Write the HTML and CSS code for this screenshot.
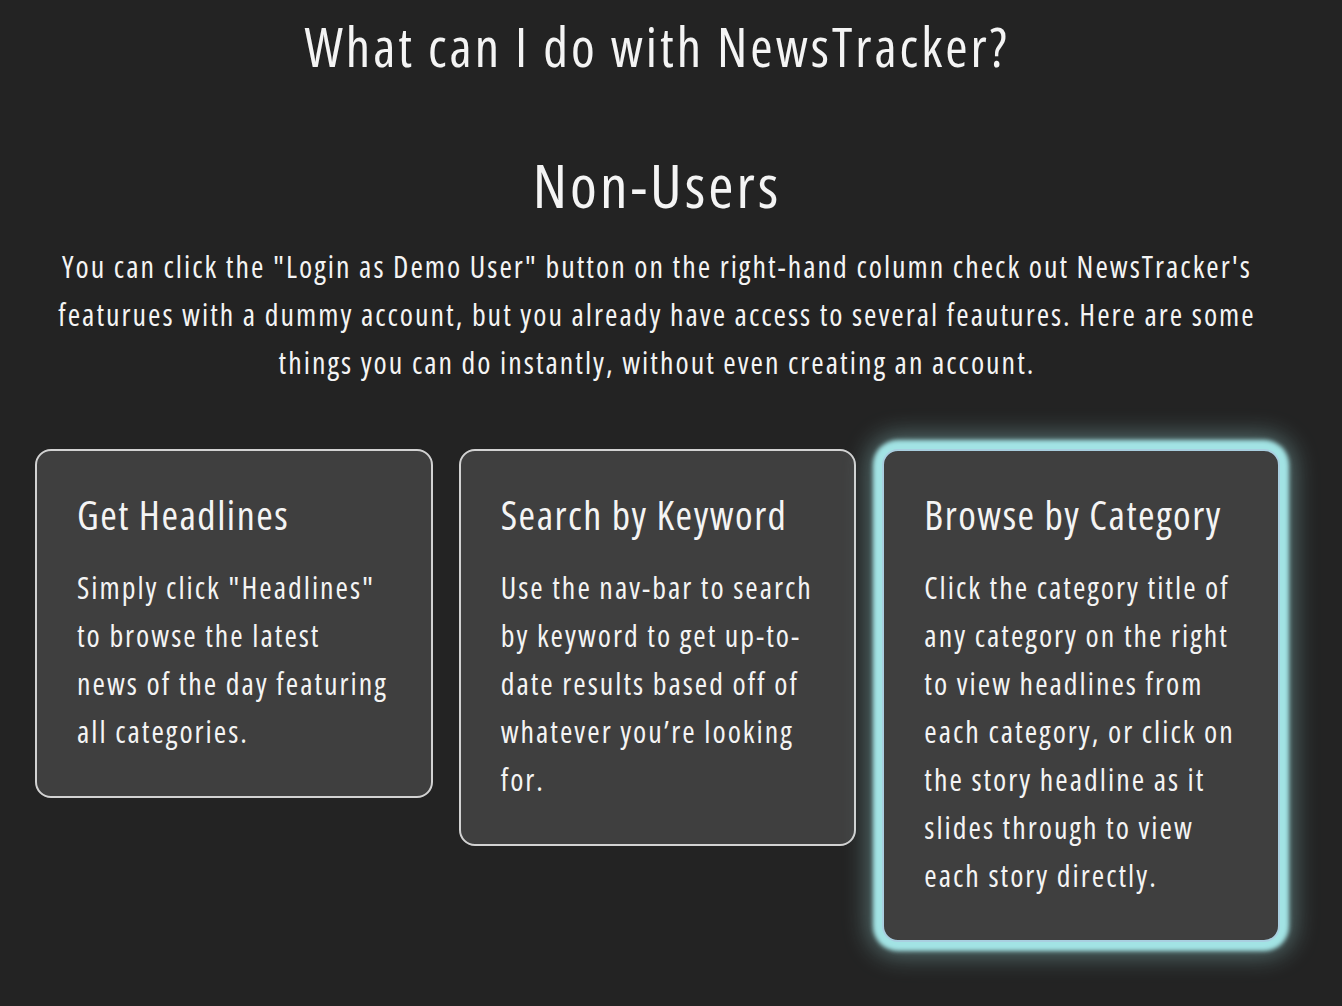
FILE: index.html
```html
<!DOCTYPE html>
<html lang="en">
<head>
<meta charset="utf-8">
<title>NewsTracker</title>
<link rel="stylesheet" href="styles.css">
</head>
<body>
<main class="about">
  <h1 class="about-title">What can I do with NewsTracker?</h1>
  <h2 class="section-title">Non-Users</h2>
  <p class="section-intro">You can click the "Login as Demo User" button on the right-hand column check out NewsTracker's featurues with a dummy account, but you already have access to several feautures. Here are some things you can do instantly, without even creating an account.</p>
  <div class="cards">
    <div class="card">
      <h3 class="card-title">Get Headlines</h3>
      <p class="card-text">Simply click "Headlines" to browse the latest news&nbsp;of the day featuring all categories.</p>
    </div>
    <div class="card">
      <h3 class="card-title">Search by Keyword</h3>
      <p class="card-text">Use the nav-bar to search by keyword to get up-to-date results based off of whatever you’re looking for.</p>
    </div>
    <div class="card card-glow">
      <h3 class="card-title">Browse by Category</h3>
      <p class="card-text">Click the category title of any category on the right to view headlines from each category, or click on the story headline as it slides through to view each story directly.</p>
    </div>
  </div>
</main>
</body>
</html>
```

FILE: styles.css
```css
html, body {
  margin: 0;
  padding: 0;
  background: #232323;
}
body {
  font-family: "Open Sans", "DejaVu Sans", sans-serif;
  font-stretch: condensed;
  font-weight: 400;
  color: #f4f4f4;
  height: 1006px;
  overflow: hidden;
}
.about {
  width: 1314px;
  text-align: center;
}
.about-title {
  font-weight: 400;
  font-size: 54px;
  letter-spacing: 3px;
  line-height: 64px;
  margin: 14px 0 0;
}
.section-title {
  font-weight: 400;
  font-size: 61px;
  letter-spacing: 3px;
  line-height: 72px;
  margin: 71px 0 0;
}
.section-intro {
  font-size: 30px;
  letter-spacing: 2px;
  line-height: 48px;
  margin: 22px 0 0;
  padding: 0 50px;
}
.cards {
  display: flex;
  align-items: flex-start;
  gap: 26px;
  padding: 0 34px 0 35px;
  margin-top: 62px;
  text-align: left;
}
.card {
  width: 398px;
  box-sizing: border-box;
  background: #3f3f3f;
  border: 2px solid #d2d2d2;
  border-radius: 16px;
  padding: 40px 30px 40px 40px;
}
.card-glow {
  border-color: #a9cfe0;
  box-shadow: 0 0 4px 9px #a2e3e4, 0 0 24px 14px rgba(162, 227, 228, 0.4);
}
.card-title {
  font-weight: 400;
  font-size: 40px;
  letter-spacing: 1.5px;
  line-height: 48px;
  margin: 0;
}
.card-text {
  font-size: 30px;
  letter-spacing: 2px;
  line-height: 48px;
  margin: 25px 0 0;
}
```
